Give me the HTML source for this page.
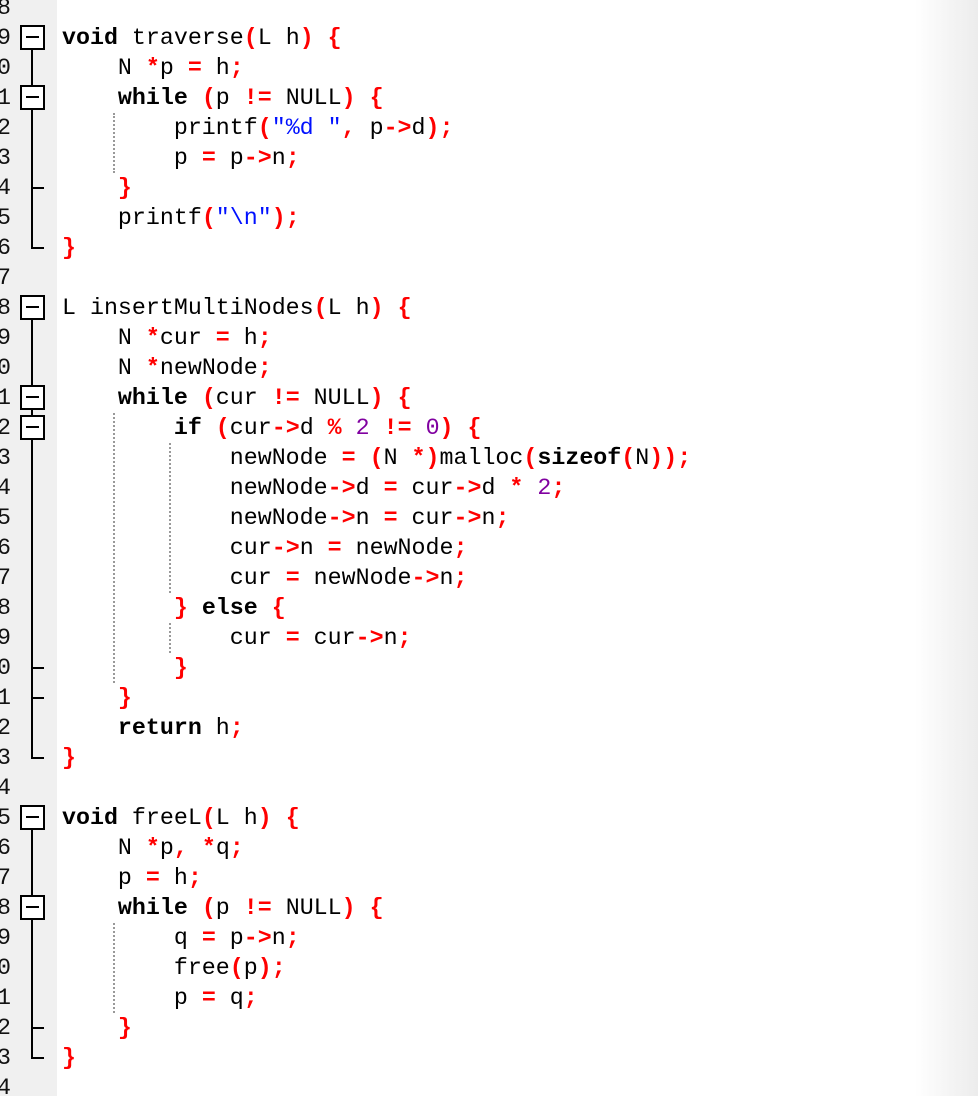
<!DOCTYPE html>
<html><head><meta charset="utf-8"><style>
html,body{margin:0;padding:0;}
body{width:978px;height:1096px;overflow:hidden;position:relative;background:#fff;font-family:"Liberation Mono",monospace;}
#grad{position:absolute;left:915px;top:0;width:63px;height:1096px;background:linear-gradient(to right,#fff,#ececec);}
#gut{position:absolute;left:0;top:0;width:57px;height:1096px;background:#f0f0f0;}
.ln{position:absolute;left:-3px;font-size:23.3px;line-height:30px;color:#111;}
.row{position:absolute;left:62px;font-size:23.3px;line-height:30px;white-space:pre;color:#000;}
.o{color:#ff0000;font-weight:bold}
.k{font-weight:bold}
.n{color:#8000a0}
.s{color:#0010ff}
.vl{position:absolute;left:31px;width:2px;background:#000;}
.tk{position:absolute;left:31px;width:13px;height:2px;background:#000;}
.bx{position:absolute;left:20px;width:21px;height:21px;border:2px solid #000;background:#fff;}
.bx:after{content:"";position:absolute;left:4px;top:9px;width:13px;height:2px;background:#000;}
.g{position:absolute;width:0;border-left:2px dotted #999;}
</style></head><body>
<div id="grad"></div>
<div id="gut"></div>

<!-- line numbers -->
<div class="ln" style="top:-7px">8</div><div class="ln" style="top:23px">9</div><div class="ln" style="top:53px">0</div><div class="ln" style="top:83px">1</div><div class="ln" style="top:113px">2</div><div class="ln" style="top:143px">3</div><div class="ln" style="top:173px">4</div><div class="ln" style="top:203px">5</div><div class="ln" style="top:233px">6</div><div class="ln" style="top:263px">7</div><div class="ln" style="top:293px">8</div><div class="ln" style="top:323px">9</div><div class="ln" style="top:353px">0</div><div class="ln" style="top:383px">1</div><div class="ln" style="top:413px">2</div><div class="ln" style="top:443px">3</div><div class="ln" style="top:473px">4</div><div class="ln" style="top:503px">5</div><div class="ln" style="top:533px">6</div><div class="ln" style="top:563px">7</div><div class="ln" style="top:593px">8</div><div class="ln" style="top:623px">9</div><div class="ln" style="top:653px">0</div><div class="ln" style="top:683px">1</div><div class="ln" style="top:713px">2</div><div class="ln" style="top:743px">3</div><div class="ln" style="top:773px">4</div><div class="ln" style="top:803px">5</div><div class="ln" style="top:833px">6</div><div class="ln" style="top:863px">7</div><div class="ln" style="top:893px">8</div><div class="ln" style="top:923px">9</div><div class="ln" style="top:953px">0</div><div class="ln" style="top:983px">1</div><div class="ln" style="top:1013px">2</div><div class="ln" style="top:1043px">3</div><div class="ln" style="top:1073px">4</div>

<!-- fold tree -->
<div class="vl" style="top:38px;height:211px"></div>
<div class="tk" style="top:187px"></div><div class="tk" style="top:247px"></div>
<div class="bx" style="top:25px"></div><div class="bx" style="top:85px"></div>

<div class="vl" style="top:308px;height:451px"></div>
<div class="tk" style="top:667px"></div><div class="tk" style="top:697px"></div><div class="tk" style="top:757px"></div>
<div class="bx" style="top:295px"></div><div class="bx" style="top:385px"></div><div class="bx" style="top:415px"></div>

<div class="vl" style="top:818px;height:241px"></div>
<div class="tk" style="top:1027px"></div><div class="tk" style="top:1057px"></div>
<div class="bx" style="top:805px"></div><div class="bx" style="top:895px"></div>

<!-- indent guides -->
<div class="g" style="left:113px;top:113px;height:60px"></div>
<div class="g" style="left:113px;top:413px;height:270px"></div>
<div class="g" style="left:169px;top:443px;height:150px"></div>
<div class="g" style="left:169px;top:623px;height:30px"></div>
<div class="g" style="left:113px;top:923px;height:90px"></div>

<!-- code -->
<div class="row" style="top:23px"><span class="k">void</span> traverse<span class="o">(</span>L h<span class="o">)</span> <span class="o">{</span></div>
<div class="row" style="top:53px">    N <span class="o">*</span>p <span class="o">=</span> h<span class="o">;</span></div>
<div class="row" style="top:83px">    <span class="k">while</span> <span class="o">(</span>p <span class="o">!=</span> NULL<span class="o">)</span> <span class="o">{</span></div>
<div class="row" style="top:113px">        printf<span class="o">(</span><span class="s">"%d "</span><span class="o">,</span> p<span class="o">-&gt;</span>d<span class="o">);</span></div>
<div class="row" style="top:143px">        p <span class="o">=</span> p<span class="o">-&gt;</span>n<span class="o">;</span></div>
<div class="row" style="top:173px">    <span class="o">}</span></div>
<div class="row" style="top:203px">    printf<span class="o">(</span><span class="s">"\n"</span><span class="o">);</span></div>
<div class="row" style="top:233px"><span class="o">}</span></div>

<div class="row" style="top:293px">L insertMultiNodes<span class="o">(</span>L h<span class="o">)</span> <span class="o">{</span></div>
<div class="row" style="top:323px">    N <span class="o">*</span>cur <span class="o">=</span> h<span class="o">;</span></div>
<div class="row" style="top:353px">    N <span class="o">*</span>newNode<span class="o">;</span></div>
<div class="row" style="top:383px">    <span class="k">while</span> <span class="o">(</span>cur <span class="o">!=</span> NULL<span class="o">)</span> <span class="o">{</span></div>
<div class="row" style="top:413px">        <span class="k">if</span> <span class="o">(</span>cur<span class="o">-&gt;</span>d <span class="o">%</span> <span class="n">2</span> <span class="o">!=</span> <span class="n">0</span><span class="o">)</span> <span class="o">{</span></div>
<div class="row" style="top:443px">            newNode <span class="o">=</span> <span class="o">(</span>N <span class="o">*)</span>malloc<span class="o">(</span><span class="k">sizeof</span><span class="o">(</span>N<span class="o">));</span></div>
<div class="row" style="top:473px">            newNode<span class="o">-&gt;</span>d <span class="o">=</span> cur<span class="o">-&gt;</span>d <span class="o">*</span> <span class="n">2</span><span class="o">;</span></div>
<div class="row" style="top:503px">            newNode<span class="o">-&gt;</span>n <span class="o">=</span> cur<span class="o">-&gt;</span>n<span class="o">;</span></div>
<div class="row" style="top:533px">            cur<span class="o">-&gt;</span>n <span class="o">=</span> newNode<span class="o">;</span></div>
<div class="row" style="top:563px">            cur <span class="o">=</span> newNode<span class="o">-&gt;</span>n<span class="o">;</span></div>
<div class="row" style="top:593px">        <span class="o">}</span> <span class="k">else</span> <span class="o">{</span></div>
<div class="row" style="top:623px">            cur <span class="o">=</span> cur<span class="o">-&gt;</span>n<span class="o">;</span></div>
<div class="row" style="top:653px">        <span class="o">}</span></div>
<div class="row" style="top:683px">    <span class="o">}</span></div>
<div class="row" style="top:713px">    <span class="k">return</span> h<span class="o">;</span></div>
<div class="row" style="top:743px"><span class="o">}</span></div>

<div class="row" style="top:803px"><span class="k">void</span> freeL<span class="o">(</span>L h<span class="o">)</span> <span class="o">{</span></div>
<div class="row" style="top:833px">    N <span class="o">*</span>p<span class="o">,</span> <span class="o">*</span>q<span class="o">;</span></div>
<div class="row" style="top:863px">    p <span class="o">=</span> h<span class="o">;</span></div>
<div class="row" style="top:893px">    <span class="k">while</span> <span class="o">(</span>p <span class="o">!=</span> NULL<span class="o">)</span> <span class="o">{</span></div>
<div class="row" style="top:923px">        q <span class="o">=</span> p<span class="o">-&gt;</span>n<span class="o">;</span></div>
<div class="row" style="top:953px">        free<span class="o">(</span>p<span class="o">);</span></div>
<div class="row" style="top:983px">        p <span class="o">=</span> q<span class="o">;</span></div>
<div class="row" style="top:1013px">    <span class="o">}</span></div>
<div class="row" style="top:1043px"><span class="o">}</span></div>
</body></html>
